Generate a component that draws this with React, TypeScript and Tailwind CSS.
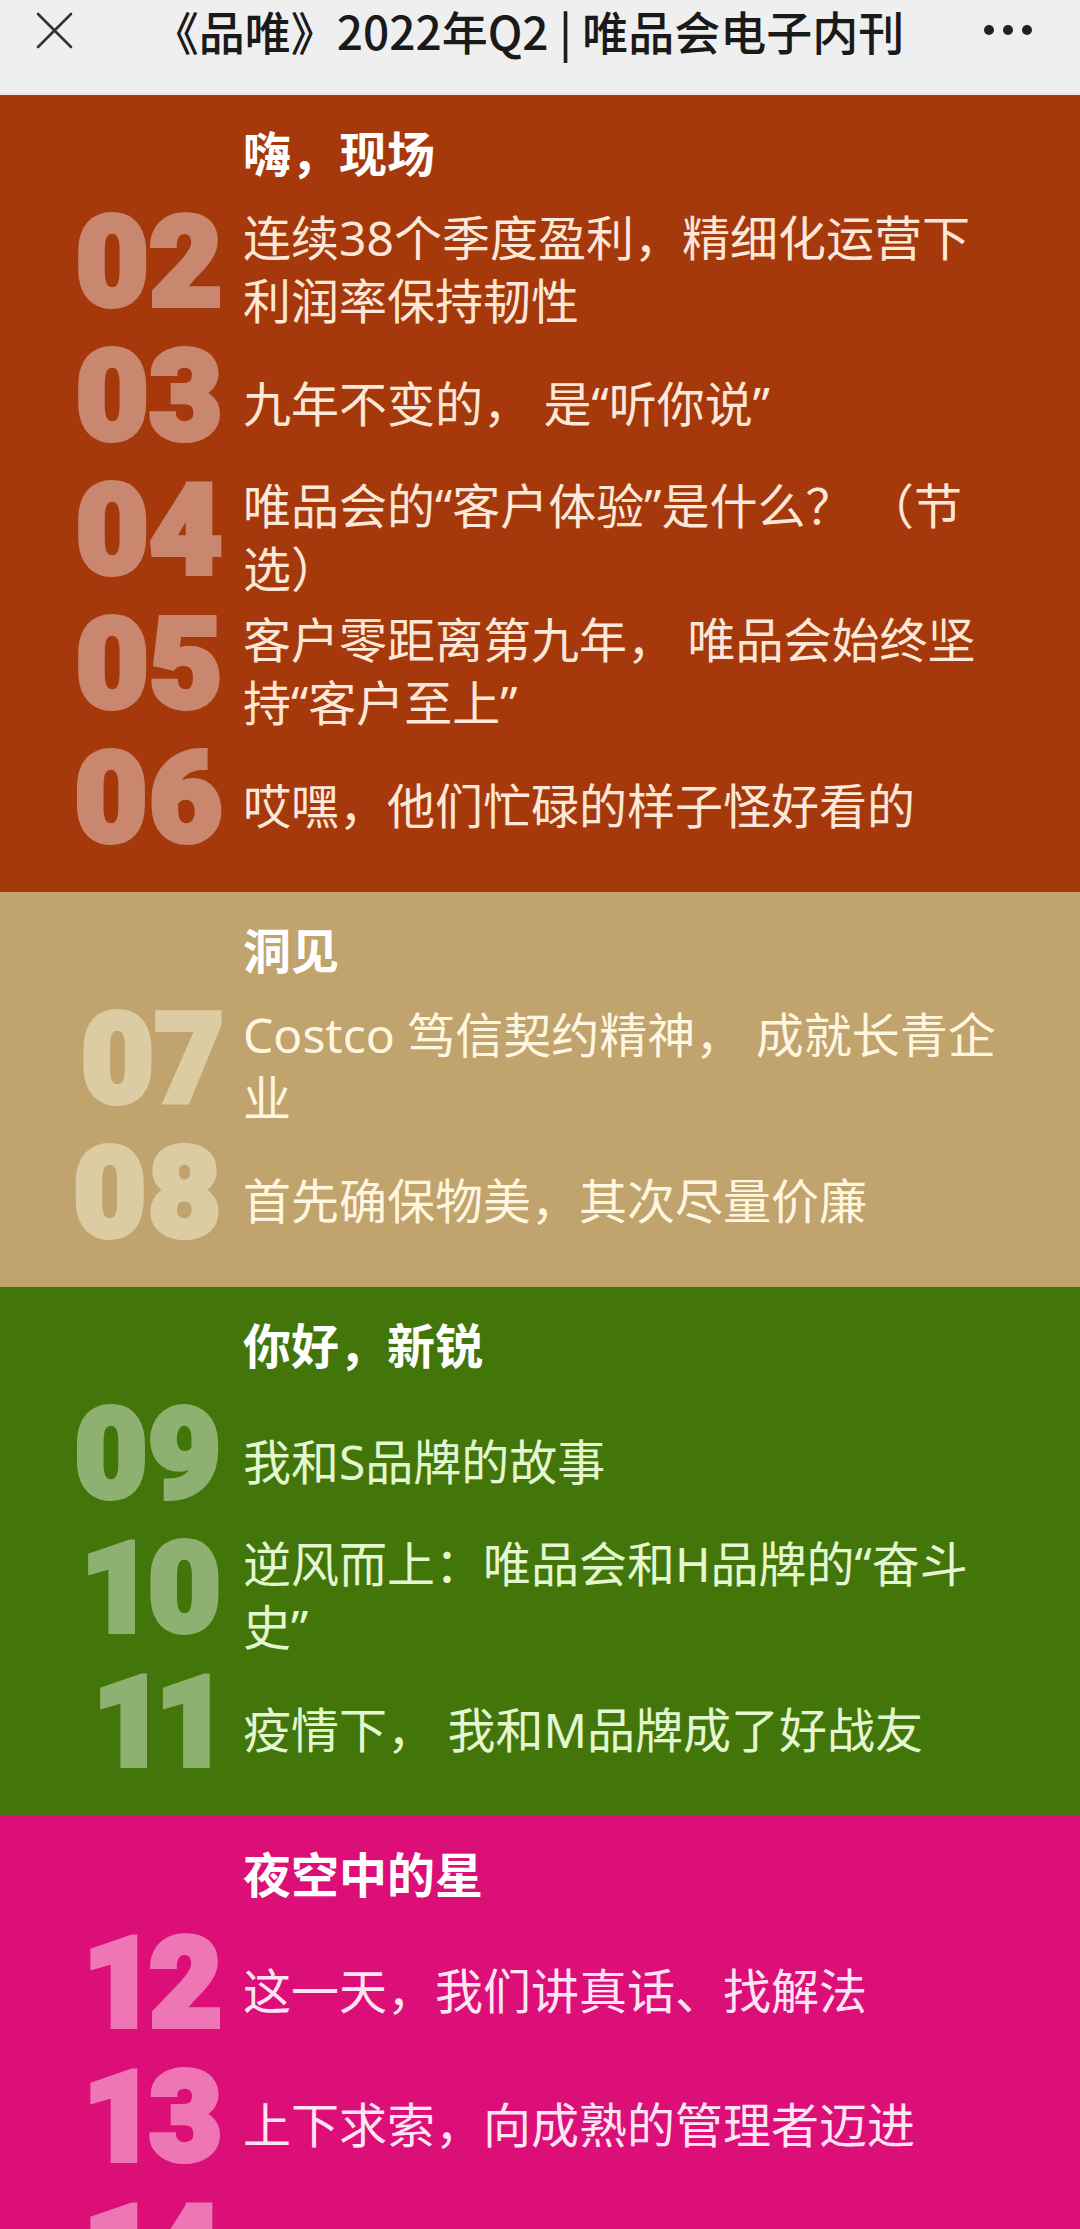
type Item = { no: string; title: string };
type Section = {
    heading: string;
    bg: string;
    numColor: string;
    numStroke: string;
    textColor: string;
    items: Item[];
};

const sections: Section[] = [
    {
        heading: '嗨，现场',
        bg: 'bg-[#a6390b]',
        numColor: 'text-[#c98770]',
        numStroke: '[-webkit-text-stroke:6px_#c98770]',
        textColor: 'text-[#fde7d8]',
        items: [
            { no: '02', title: '连续38个季度盈利，精细化运营下利润率保持韧性' },
            { no: '03', title: '九年不变的， 是“听你说”' },
            { no: '04', title: '唯品会的“客户体验”是什么？ （节选）' },
            { no: '05', title: '客户零距离第九年， 唯品会始终坚持“客户至上”' },
            { no: '06', title: '哎嘿，他们忙碌的样子怪好看的' },
        ],
    },
    {
        heading: '洞见',
        bg: 'bg-[#c0a36d]',
        numColor: 'text-[#dccca3]',
        numStroke: '[-webkit-text-stroke:6px_#dccca3]',
        textColor: 'text-[#fff6e0]',
        items: [
            { no: '07', title: 'Costco 笃信契约精神， 成就长青企业' },
            { no: '08', title: '首先确保物美，其次尽量价廉' },
        ],
    },
    {
        heading: '你好，新锐',
        bg: 'bg-[#42760a]',
        numColor: 'text-[#8eb172]',
        numStroke: '[-webkit-text-stroke:6px_#8eb172]',
        textColor: 'text-[#e4f7d0]',
        items: [
            { no: '09', title: '我和S品牌的故事' },
            { no: '10', title: '逆风而上：唯品会和H品牌的“奋斗史”' },
            { no: '11', title: '疫情下， 我和M品牌成了好战友' },
        ],
    },
    {
        heading: '夜空中的星',
        bg: 'bg-[#dc0e77]',
        numColor: 'text-[#ee76b5]',
        numStroke: '[-webkit-text-stroke:6px_#ee76b5]',
        textColor: 'text-[#ffe4f3]',
        items: [
            { no: '12', title: '这一天，我们讲真话、找解法' },
            { no: '13', title: '上下求索，向成熟的管理者迈进' },
            { no: '14', title: '' },
        ],
    },
];

const Header = () => (
    <div className="h-[95px] bg-[#efefef] border-b-2 border-[#f6e3da]">
        <div className="h-[60px] flex items-center justify-between pl-[36px] pr-[48px]">
            <svg width="37" height="37" viewBox="0 0 37 37" className="shrink-0">
                <path d="M2 2 L35 35 M35 2 L2 35" stroke="#333" strokeWidth="2.6" strokeLinecap="round" />
            </svg>
            <h1 className="text-[46px] leading-[60px] font-medium text-[#1a1a1a] font-['Noto_Sans_CJK_SC',sans-serif] whitespace-nowrap">
                《品唯》2022年Q2 | 唯品会电子内刊
            </h1>
            <div className="flex items-center gap-[9px] shrink-0">
                <span className="w-[10px] h-[10px] rounded-full bg-[#222]" />
                <span className="w-[10px] h-[10px] rounded-full bg-[#222]" />
                <span className="w-[10px] h-[10px] rounded-full bg-[#222]" />
            </div>
        </div>
    </div>
);

const SectionBlock = ({ section }: { section: Section }) => (
    <section className={`${section.bg} pt-[26px] pb-[20px]`}>
        <h2 className="pl-[243px] text-[48px] leading-[60px] font-bold text-white font-['Noto_Sans_CJK_SC',sans-serif]">
            {section.heading}
        </h2>
        <div className="mt-[21px] flex flex-col">
            {section.items.map((item) => (
                <div key={item.no} className="flex items-center gap-[18px] min-h-[134px]">
                    {/* big number */}
                    <div
                        className={`w-[222px] shrink-0 text-right mb-[12px] font-['Roboto',sans-serif] font-black text-[125px] leading-[98px] proportional-nums ${section.numColor} ${section.numStroke}`}
                    >
                        {item.no}
                    </div>
                    <p className={`flex-1 pl-[3px] pr-[65px] text-[48px] leading-[63px] ${section.textColor}`}>
                        {item.title}
                    </p>
                </div>
            ))}
        </div>
    </section>
);

export default function App() {
    return (
        <div className="w-[1080px] font-['Noto_Sans','Noto_Sans_CJK_SC',sans-serif]">
            <Header />
            {sections.map((s) => (
                <SectionBlock key={s.heading} section={s} />
            ))}
        </div>
    );
}
